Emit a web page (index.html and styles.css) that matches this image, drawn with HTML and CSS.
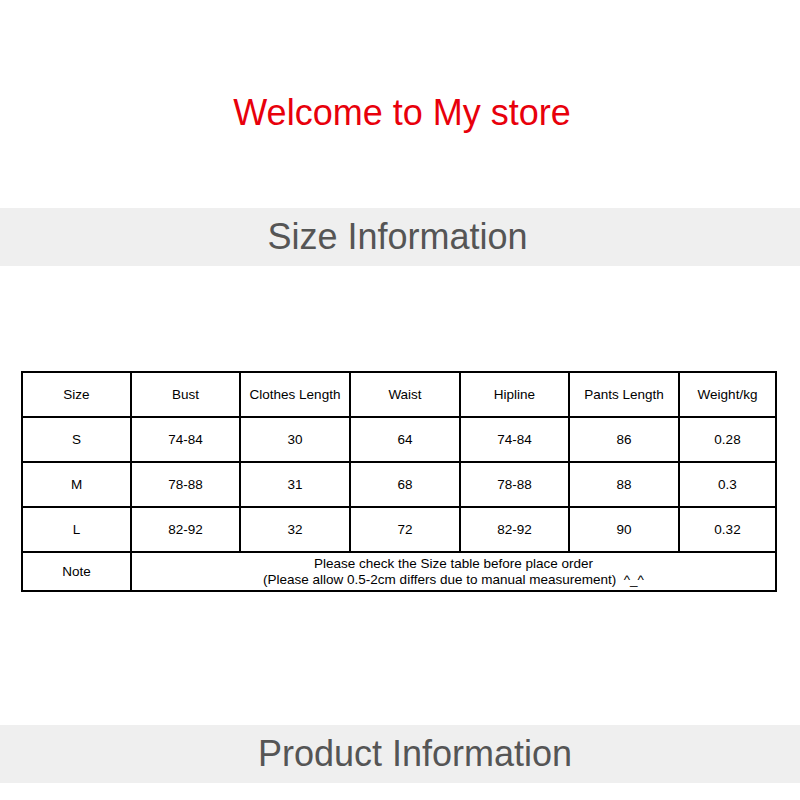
FILE: index.html
```html
<!DOCTYPE html>
<html>
<head>
<meta charset="utf-8">
<link rel="stylesheet" href="styles.css">
</head>
<body>
<div class="page">
  <header class="welcome">
    <h1 class="welcome-title">Welcome to My store</h1>
  </header>
  <div class="band band-size">Size Information</div>
  <section class="table-wrap">
    <table class="size-table">
      <colgroup>
        <col class="c1"><col class="c2"><col class="c3"><col class="c4"><col class="c5"><col class="c6"><col class="c7">
      </colgroup>
      <tr class="row">
        <td>Size</td><td>Bust</td><td>Clothes Length</td><td>Waist</td><td>Hipline</td><td>Pants Length</td><td>Weight/kg</td>
      </tr>
      <tr class="row">
        <td>S</td><td>74-84</td><td>30</td><td>64</td><td>74-84</td><td>86</td><td>0.28</td>
      </tr>
      <tr class="row">
        <td>M</td><td>78-88</td><td>31</td><td>68</td><td>78-88</td><td>88</td><td>0.3</td>
      </tr>
      <tr class="row">
        <td>L</td><td>82-92</td><td>32</td><td>72</td><td>82-92</td><td>90</td><td>0.32</td>
      </tr>
      <tr class="row note-row">
        <td>Note</td>
        <td colspan="6" class="note">Please check the Size table before place order<br>(Please allow 0.5-2cm differs due to manual measurement)&nbsp; ^_^</td>
      </tr>
    </table>
  </section>
  <div class="band band-product">Product Information</div>
</div>
</body>
</html>
```

FILE: styles.css
```css
html, body {
  margin: 0;
  padding: 0;
  background: #fff;
}
.page {
  width: 800px;
  font-family: "Liberation Sans", Arial, sans-serif;
}
.welcome {
  height: 208px;
  box-sizing: border-box;
  padding-top: 92px;
}
.welcome-title {
  margin: 0;
  font-weight: normal;
  font-size: 36px;
  line-height: 41px;
  color: #e8000b;
  text-align: center;
  padding-left: 4px;
}
.band {
  height: 58px;
  line-height: 58px;
  background: #efefef;
  color: #555;
  font-size: 36px;
  text-align: center;
}
.band-size {
  padding-right: 5px;
}
.band-product {
  padding-left: 30px;
}
.table-wrap {
  padding: 105px 0 0 21px;
  height: 459px;
  box-sizing: border-box;
}
.size-table {
  border-collapse: collapse;
  table-layout: fixed;
  width: 754px;
  font-size: 13.5px;
  color: #000;
}
.size-table td {
  border: 2px solid #000;
  text-align: center;
  vertical-align: middle;
  padding: 0;
}
.c1, .c2, .c5 { width: 109px; }
.c3, .c4, .c6 { width: 110px; }
.c7 { width: 97px; }
.row { height: 45px; }
.note-row { height: 39px; }
.note {
  line-height: 16px;
}
```
